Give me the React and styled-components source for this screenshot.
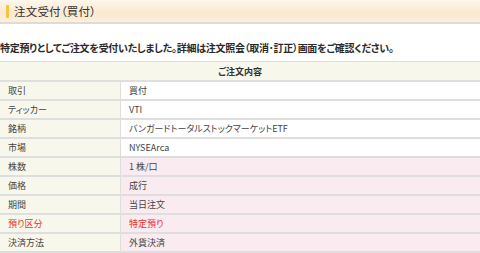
import React from 'react';
import styled, { createGlobalStyle } from 'styled-components';

const GlobalStyle = createGlobalStyle`
  html, body {
    margin: 0;
    padding: 0;
    background: #fff;
  }
  body {
    width: 480px;
    height: 253px;
    overflow: hidden;
    font-family: "Noto Sans CJK JP", "Noto Sans", sans-serif;
    font-feature-settings: "palt";
    color: #333;
  }
`;

const Page = styled.div`
  display: flex;
  flex-direction: column;
  width: 480px;
`;

const TitleBar = styled.div`
  display: flex;
  align-items: center;
  gap: 5px;
  height: 22px;
  padding-left: 6px;
  background: linear-gradient(to bottom, #fef7ec 0%, #fbe9cf 55%, #fcefdc 100%);
  border-bottom: 2px solid #dedbd6;
`;

const Accent = styled.span`
  width: 3px;
  height: 13px;
  background: #f4c53c;
  border-radius: 1px;
`;

const Title = styled.h1`
  margin: 0;
  font-size: 11.5px;
  font-weight: normal;
  color: #333;
  letter-spacing: 0.2px;
`;

const Message = styled.p`
  margin: 17px 0 6px;
  font-size: 10px;
  line-height: 14px;
  font-weight: bold;
  color: #2a2a2a;
  letter-spacing: -0.28px;
  white-space: nowrap;
`;

const OrderTable = styled.table`
  width: 100%;
  border-collapse: collapse;
  font-size: 9px;
  border-top: 1px solid #dcdcdc;
`;

const HeadCell = styled.th`
  height: 18px;
  padding: 0;
  background: #f8f7eb;
  font-weight: bold;
  font-size: 9px;
  color: #333;
  text-align: center;
  border-bottom: 2px solid #dedede;
`;

const LabelCell = styled.td`
  width: 112px;
  height: 17px;
  padding: 0 0 0 8px;
  background: #f8f7eb;
  color: ${(p) => (p.$alert ? '#e8322e' : '#444')};
  border-bottom: 2px solid #dedede;
  border-right: 1px solid #dedede;
`;

const ValueCell = styled.td`
  height: 17px;
  padding: 0 0 0 8px;
  background: ${(p) => (p.$pink ? '#f9ebef' : '#fff')};
  color: ${(p) => (p.$alert ? '#e8322e' : '#444')};
  border-bottom: 2px solid #dedede;
`;

const rows = [
  { label: '取引', value: '買付' },
  { label: 'ティッカー', value: 'VTI' },
  { label: '銘柄', value: 'バンガードトータルストックマーケットETF' },
  { label: '市場', value: 'NYSEArca' },
  { label: '株数', value: '1 株/口', pink: true },
  { label: '価格', value: '成行', pink: true },
  { label: '期間', value: '当日注文', pink: true },
  { label: '預り区分', value: '特定預り', pink: true, alert: true },
  { label: '決済方法', value: '外貨決済', pink: true },
];

export default function App() {
  return (
    <Page>
      <GlobalStyle />
      <TitleBar>
        <Accent />
        <Title>注文受付（買付）</Title>
      </TitleBar>
      <Message>
        特定預りとしてご注文を受付いたしました。詳細は注文照会（取消･訂正）画面をご確認ください。
      </Message>
      <OrderTable>
        <thead>
          <tr>
            <HeadCell colSpan={2}>ご注文内容</HeadCell>
          </tr>
        </thead>
        <tbody>
          {rows.map((r) => (
            <tr key={r.label}>
              <LabelCell $alert={r.alert}>{r.label}</LabelCell>
              <ValueCell $pink={r.pink} $alert={r.alert}>
                {r.value}
              </ValueCell>
            </tr>
          ))}
        </tbody>
      </OrderTable>
    </Page>
  );
}
